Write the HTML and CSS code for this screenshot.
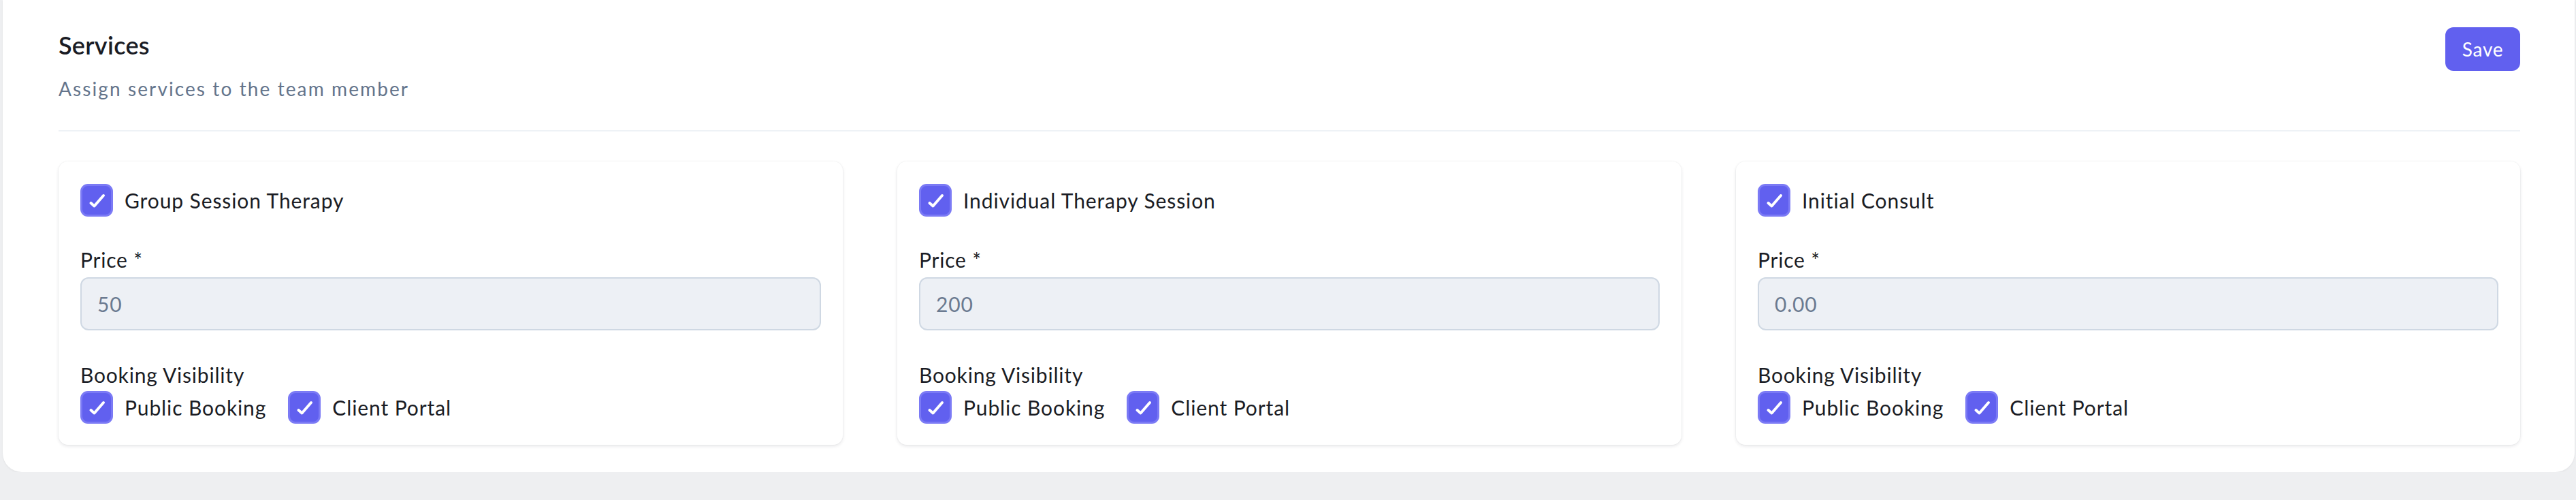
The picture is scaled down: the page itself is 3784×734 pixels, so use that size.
FILE: index.html
```html
<!DOCTYPE html>
<html lang="en">
<head>
<meta charset="utf-8">
<title>Services</title>
<link rel="stylesheet" href="styles.css">
</head>
<body>
<section class="panel">
  <header class="panel-head">
    <div class="head-text">
      <h2 class="title">Services</h2>
      <p class="subtitle">Assign services to the team member</p>
    </div>
    <button class="btn-save" type="button">Save</button>
  </header>
  <div class="divider"></div>
  <div class="grid">
    <div class="svc-card">
      <label class="check-row">
        <span class="cbox"><svg viewBox="0 0 48 48"><path d="M15.5 28 L20.5 32.5 L34 17"/></svg></span>
        <span class="check-text">Group Session Therapy</span>
      </label>
      <div class="field-label">Price *</div>
      <div class="input">50</div>
      <div class="field-label vis-label">Booking Visibility</div>
      <div class="vis-row">
        <label class="check-row"><span class="cbox"><svg viewBox="0 0 48 48"><path d="M15.5 28 L20.5 32.5 L34 17"/></svg></span><span class="check-text">Public Booking</span></label>
        <label class="check-row"><span class="cbox"><svg viewBox="0 0 48 48"><path d="M15.5 28 L20.5 32.5 L34 17"/></svg></span><span class="check-text">Client Portal</span></label>
      </div>
    </div>
    <div class="svc-card">
      <label class="check-row">
        <span class="cbox"><svg viewBox="0 0 48 48"><path d="M15.5 28 L20.5 32.5 L34 17"/></svg></span>
        <span class="check-text">Individual Therapy Session</span>
      </label>
      <div class="field-label">Price *</div>
      <div class="input">200</div>
      <div class="field-label vis-label">Booking Visibility</div>
      <div class="vis-row">
        <label class="check-row"><span class="cbox"><svg viewBox="0 0 48 48"><path d="M15.5 28 L20.5 32.5 L34 17"/></svg></span><span class="check-text">Public Booking</span></label>
        <label class="check-row"><span class="cbox"><svg viewBox="0 0 48 48"><path d="M15.5 28 L20.5 32.5 L34 17"/></svg></span><span class="check-text">Client Portal</span></label>
      </div>
    </div>
    <div class="svc-card">
      <label class="check-row">
        <span class="cbox"><svg viewBox="0 0 48 48"><path d="M15.5 28 L20.5 32.5 L34 17"/></svg></span>
        <span class="check-text">Initial Consult</span>
      </label>
      <div class="field-label">Price *</div>
      <div class="input">0.00</div>
      <div class="field-label vis-label">Booking Visibility</div>
      <div class="vis-row">
        <label class="check-row"><span class="cbox"><svg viewBox="0 0 48 48"><path d="M15.5 28 L20.5 32.5 L34 17"/></svg></span><span class="check-text">Public Booking</span></label>
        <label class="check-row"><span class="cbox"><svg viewBox="0 0 48 48"><path d="M15.5 28 L20.5 32.5 L34 17"/></svg></span><span class="check-text">Client Portal</span></label>
      </div>
    </div>
  </div>
</section>
</body>
</html>
```
FILE: styles.css
```css
* { box-sizing: border-box; }
html, body {
  margin: 0;
  padding: 0;
  background: #eeeff1;
  font-family: "Lato", "Open Sans", sans-serif;
  color: #1a1c24;
}
.panel {
  margin: 0 2px 0 4px;
  height: 693px;
  background: #ffffff;
  border-radius: 0 0 28px 28px;
  padding: 40px 80px 40px 82px;
  box-shadow: 0 1px 3px rgba(0,0,0,0.06);
}
.panel-head {
  display: flex;
  justify-content: space-between;
  align-items: flex-start;
}
.title {
  margin: 0;
  font-size: 36px;
  line-height: 54px;
  font-weight: 600;
  margin-top: -1px;
  letter-spacing: 0.3px;
}
.subtitle {
  margin: 16px 0 0;
  font-size: 28px;
  line-height: 42px;
  color: #64748b;
  letter-spacing: 2.1px;
}
.btn-save {
  width: 110px;
  height: 64px;
  border: none;
  border-radius: 12px;
  background: #6160ef;
  color: #ffffff;
  font-family: inherit;
  font-size: 28px;
  letter-spacing: 0.8px;
  padding: 0;
}
.divider {
  height: 2px;
  background: #eef2f6;
  margin-top: 40px;
}
.grid {
  display: grid;
  grid-template-columns: repeat(3, 1fr);
  gap: 80px;
  margin-top: 44px;
}
.svc-card {
  background: #ffffff;
  border-radius: 14px;
  padding: 33px 32px 31px;
  box-shadow: 0 2px 5px rgba(15, 23, 42, 0.10), 0 0 0 1px rgba(15, 23, 42, 0.025);
}
.check-row {
  display: flex;
  align-items: center;
  gap: 17px;
}
.cbox {
  width: 48px;
  height: 48px;
  flex: none;
  border-radius: 11px;
  background: #6160ef;
  border: 3px solid #7b7af5;
  display: flex;
}
.cbox svg {
  width: 48px;
  height: 48px;
  margin: -3px;
  fill: none;
  stroke: #ffffff;
  stroke-width: 4;
  stroke-linecap: round;
  stroke-linejoin: round;
}
.check-text {
  font-size: 30px;
  line-height: 40px;
  letter-spacing: 0.9px;
}
.field-label {
  font-size: 30px;
  line-height: 40px;
  margin-top: 43px;
  letter-spacing: 0.8px;
}
.input {
  margin-top: 6px;
  height: 78px;
  border: 2px solid #cfd8e3;
  border-radius: 12px;
  background: #edf0f5;
  color: #6b7a90;
  font-size: 30px;
  line-height: 74px;
  padding-left: 23px;
  letter-spacing: 0.8px;
}
.vis-label {
  margin-top: 45px;
}
.vis-row {
  display: flex;
  gap: 32px;
  margin-top: 4px;
}
```
